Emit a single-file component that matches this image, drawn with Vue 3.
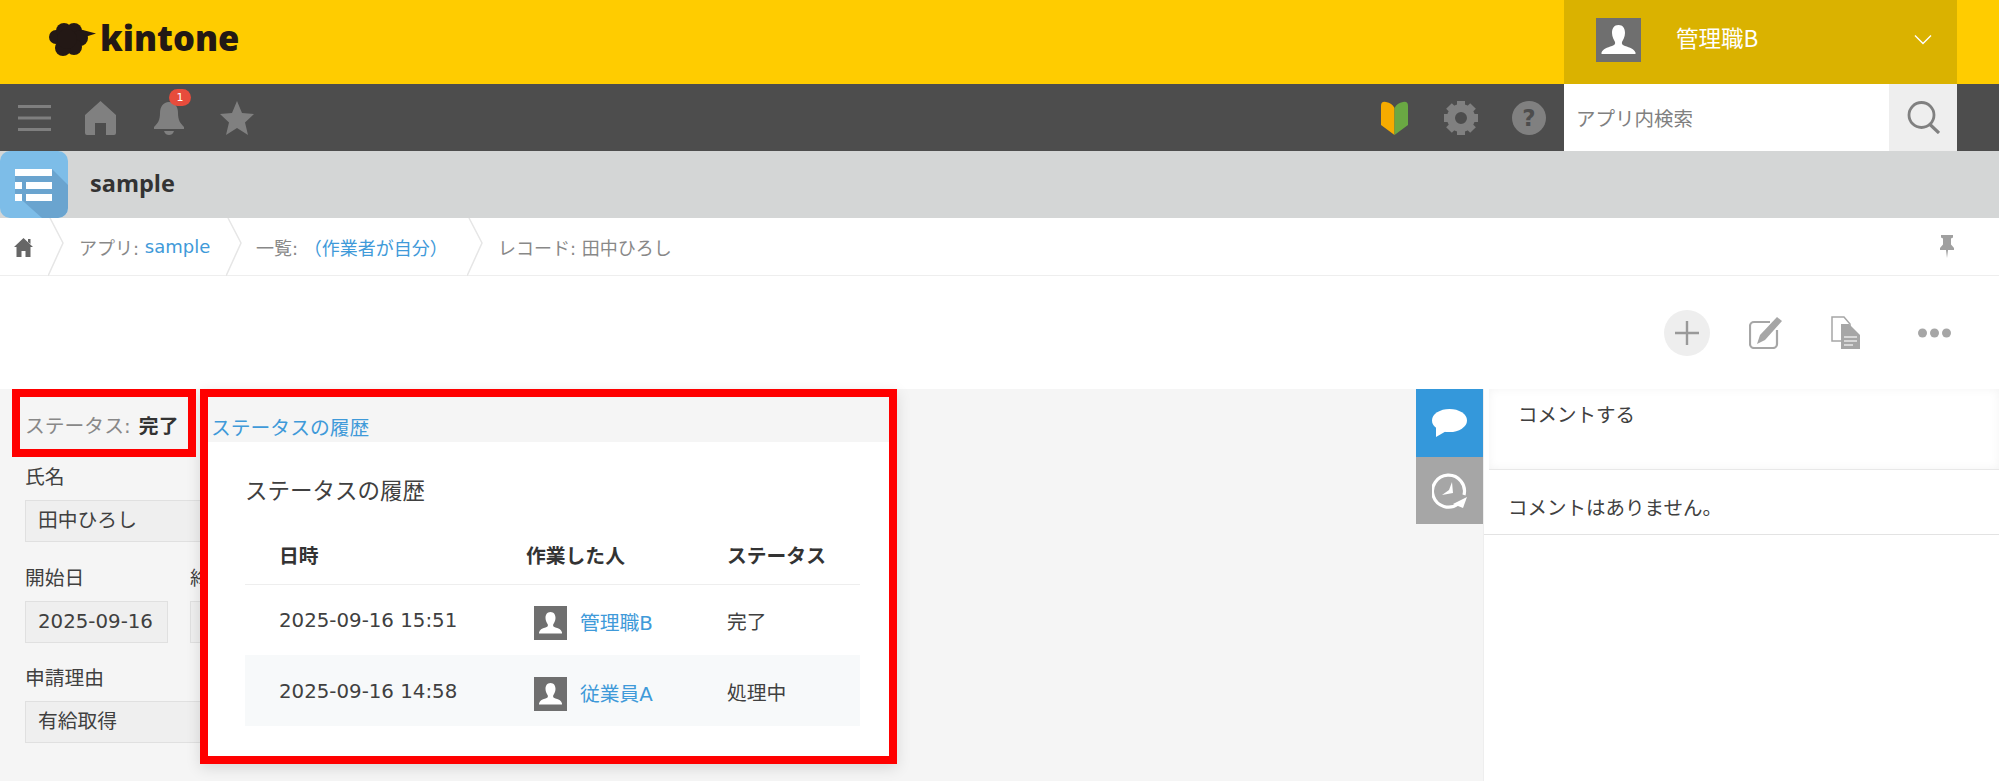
<script setup>
const rows = [
  { date: '2025-09-16 15:51', user: '管理職B', status: '完了', alt: false },
  { date: '2025-09-16 14:58', user: '従業員A', status: '処理中', alt: true }
]
const gearTeeth = [0, 45, 90, 135, 180, 225, 270, 315]
</script>

<template>
  <div class="page">
    <header class="topbar">
      <div class="logo">
        <svg class="cloud" width="47" height="33" viewBox="0 0 47 33">
          <g fill="#231815">
            <circle cx="7" cy="14" r="7" />
            <circle cx="15" cy="8" r="8" />
            <circle cx="25" cy="8" r="8" />
            <circle cx="31" cy="15" r="8" />
            <circle cx="25" cy="24" r="8" />
            <circle cx="14" cy="25" r="8" />
            <circle cx="18" cy="16" r="10" />
            <path d="M30 6 L47 10.500 L36 14 Z" />
          </g>
        </svg>
        <span class="logo-text">kintone</span>
      </div>
      <div class="user">
        <svg class="avatar-big" viewBox="0 0 45 44">
          <rect width="45" height="44" fill="#6f6f6f" />
          <path d="M22.500 7c4.500 0 6.500 3.500 6.500 8 0 4-2 7-3 9-.6 2 .6 3 3 4 5 1.500 9 3 10.500 6.500v1.500H5.500v-1.500C7 31 11 29.500 16 28c2.400-1 3.600-2 3-4-1-2-3-5-3-9 0-4.500 2-8 6.500-8z" fill="#fff" />
        </svg>
        <span class="user-name">管理職B</span>
        <svg class="chev" width="18" height="11" viewBox="0 0 18 11"><path d="M1 1.500 L9 9.500 L17 1.500" fill="none" stroke="#fff" stroke-width="1.400" /></svg>
      </div>
    </header>

    <nav class="navbar">
      <div class="nav-left">
        <svg class="ic-menu" width="33" height="28" viewBox="0 0 33 28">
          <path d="M0 2.500h33M0 14h33M0 25.500h33" stroke="#7f7f7f" stroke-width="3" />
        </svg>
        <svg class="ic-home" width="31" height="34" viewBox="0 0 31 34">
          <path d="M15.500 0 L31 14 V32 a2 2 0 0 1-2 2 H21 V22 H10 V34 H2 a2 2 0 0 1-2-2 V14 Z" fill="#808080" />
        </svg>
        <div class="bell-wrap">
          <svg width="30" height="34" viewBox="0 0 30 34">
            <path d="M15 1c6 0 9 5 9 11 0 7 2 10 6 14v2H0v-2c4-4 6-7 6-14C6 6 9 1 15 1z" fill="#808080" />
            <path d="M10 30h10c-1 3-3 4-5 4s-4-1-5-4z" fill="#808080" />
          </svg>
          <span class="badge">1</span>
        </div>
        <svg class="ic-star" width="34" height="34" viewBox="0 0 34 34">
          <path d="M17 0 L22 12 L34 13 L25 21.500 L28 34 L17 27 L6 34 L9 21.500 L0 13 L12 12 Z" fill="#808080" />
        </svg>
      </div>
      <div class="nav-right">
        <svg class="ic-leaf" width="27" height="34" viewBox="0 0 27 34">
          <path d="M13.500 34 L0 24 V5 Q0 0 5 1 Q11 2 13.500 7 Z" fill="#f6ab00" />
          <path d="M13.500 34 L27 24 V5 Q27 0 22 1 Q16 2 13.500 7 Z" fill="#6aa843" />
        </svg>
        <svg class="ic-gear" width="34" height="34" viewBox="0 0 34 34">
          <g fill="#808080">
            <rect v-for="a in gearTeeth" :key="a" x="13" y="0" width="8" height="8" :transform="`rotate(${a} 17 17)`" />
          </g>
          <circle cx="17" cy="17" r="10" fill="none" stroke="#808080" stroke-width="8" />
        </svg>
        <div class="ic-help">?</div>
        <div class="search">
          <span class="search-ph">アプリ内検索</span>
          <div class="search-btn">
            <svg width="33" height="33" viewBox="0 0 33 33">
              <circle cx="14.500" cy="14" r="12.500" fill="none" stroke="#808080" stroke-width="2.800" />
              <path d="M23 23.500 L32 32" stroke="#808080" stroke-width="3.200" />
            </svg>
          </div>
        </div>
      </div>
    </nav>

    <div class="appbar">
      <div class="app-icon">
        <svg width="68" height="67" viewBox="0 0 68 67">
          <path d="M52 18 L68 34 V57 a10 10 0 0 1-10 10 H42 L15 43 V18 Z" fill="#6aa4cf" />
          <g fill="#fff">
            <rect x="15" y="18" width="37" height="7" />
            <rect x="15" y="31" width="7" height="7" />
            <rect x="26" y="31" width="26" height="7" />
            <rect x="15" y="43" width="7" height="7" />
            <rect x="26" y="43" width="26" height="7" />
          </g>
        </svg>
      </div>
      <span class="app-name">sample</span>
    </div>

    <div class="crumbs">
      <div class="crumb crumb-home">
        <svg width="19" height="21" viewBox="0 0 19 21">
          <path d="M9.500 1 L19 10 H16.500 V20 H11.500 V14 H7.500 V20 H2.500 V10 H0 Z M14 2h2.500v5L14 5z" fill="#666" />
        </svg>
      </div>
      <svg class="sep" width="16" height="58" viewBox="0 0 16 58"><path d="M2 0 L15 25 L0 58" fill="none" stroke="#e6e6e6" stroke-width="1.500" /></svg>
      <div class="crumb crumb-app">アプリ:&nbsp;<a class="link">sample</a></div>
      <svg class="sep" width="16" height="58" viewBox="0 0 16 58"><path d="M2 0 L15 25 L0 58" fill="none" stroke="#e6e6e6" stroke-width="1.500" /></svg>
      <div class="crumb crumb-list">一覧:&nbsp;<a class="link">（作業者が自分）</a></div>
      <svg class="sep" width="16" height="58" viewBox="0 0 16 58"><path d="M2 0 L15 25 L0 58" fill="none" stroke="#e6e6e6" stroke-width="1.500" /></svg>
      <div class="crumb crumb-rec">レコード: 田中ひろし</div>
      <svg class="pin" width="14" height="23" viewBox="0 0 14 23">
        <path d="M1 0h12v2.500l-2 1v6l3 3.500v2H8l-1 8-1-8H0v-2l3-3.500v-6l-2-1z" fill="#a0a0a0" />
      </svg>
    </div>

    <div class="toolbar">
      <div class="tool-add">
        <svg width="24" height="24" viewBox="0 0 24 24"><path d="M12 0v24M0 12h24" stroke="#999" stroke-width="2.400" /></svg>
      </div>
      <svg class="tool-edit" width="33" height="32" viewBox="0 0 33 32">
        <path d="M21 5H5a4 4 0 0 0-4 4v18a4 4 0 0 0 4 4h19a4 4 0 0 0 4-4V13" fill="none" stroke="#a6a6a6" stroke-width="2.200" />
        <path d="M28 0 L33 4 L16 23 L8 27 L11 18 Z" fill="#a6a6a6" />
      </svg>
      <svg class="tool-copy" width="29" height="33" viewBox="0 0 29 33">
        <path d="M1 1h12l6 7v17H1z" fill="#fff" stroke="#a6a6a6" stroke-width="1.500" />
        <path d="M10 8h8l11 11v14H10z" fill="#a6a6a6" />
        <path d="M13 21h13M13 25h13M13 29h9" stroke="#e8e8e8" stroke-width="1.500" />
      </svg>
      <svg class="tool-more" width="33" height="10" viewBox="0 0 33 10">
        <g fill="#a6a6a6"><circle cx="4.500" cy="5" r="4.500" /><circle cx="16.500" cy="5" r="4.500" /><circle cx="28.500" cy="5" r="4.500" /></g>
      </svg>
    </div>

    <main class="main">
      <section class="record">
        <div class="status-line">ステータス: <b>完了</b></div>
        <div class="field">
          <div class="label">氏名</div>
          <div class="value value-wide">田中ひろし</div>
        </div>
        <div class="field-row">
          <div class="field">
            <div class="label">開始日</div>
            <div class="value">2025-09-16</div>
          </div>
          <div class="field">
            <div class="label">終了日</div>
            <div class="value">2025-09-16</div>
          </div>
        </div>
        <div class="field">
          <div class="label">申請理由</div>
          <div class="value value-wide">有給取得</div>
        </div>
      </section>

      <div class="tabs">
        <div class="tab tab-comment">
          <svg width="35" height="28" viewBox="0 0 35 28">
            <ellipse cx="17.500" cy="11.500" rx="17.500" ry="11.500" fill="#fff" />
            <path d="M4 17 L4 28 L16 21 Z" fill="#fff" />
          </svg>
        </div>
        <div class="tab tab-history">
          <svg width="35" height="37" viewBox="0 0 35 37">
            <path d="M26 32 A16 16 0 1 1 32 23" fill="none" stroke="#fff" stroke-width="3.200" />
            <path d="M35 25 L31 36 L21 32 Z" fill="#fff" />
            <path d="M20 10 L21 21 L10 23 L17 18 Z" fill="#fff" />
          </svg>
        </div>
      </div>

      <aside class="comments">
        <div class="comment-box">コメントする</div>
        <div class="no-comment">コメントはありません。</div>
      </aside>

      <div class="popup">
        <div class="popup-head"><a class="link">ステータスの履歴</a></div>
        <div class="popup-body">
          <h2 class="popup-title">ステータスの履歴</h2>
          <table class="history">
            <thead>
              <tr>
                <th class="c-date">日時</th>
                <th class="c-user">作業した人</th>
                <th class="c-status">ステータス</th>
              </tr>
            </thead>
            <tbody>
              <tr v-for="r in rows" :key="r.date" :class="{ alt: r.alt }">
                <td><span class="cell-text">{{ r.date }}</span></td>
                <td>
                  <div class="person">
                    <svg class="avatar" viewBox="0 0 33 34">
                      <rect width="33" height="34" fill="#6f6f6f" />
                      <path d="M16.500 6c3.500 0 5 2.800 5 6 0 3-1.500 5-2.300 6.500-.5 1.500.5 2.500 2.300 3 3.500 1 6 2.300 6.500 5v1H5v-1c.5-2.700 3-4 6.500-5 1.800-.5 2.800-1.500 2.300-3C13 17 11.500 15 11.500 12c0-3.200 1.500-6 5-6z" fill="#fff" />
                    </svg>
                    <a class="link">{{ r.user }}</a>
                  </div>
                </td>
                <td><span class="cell-text">{{ r.status }}</span></td>
              </tr>
            </tbody>
          </table>
        </div>
      </div>

      <div class="mark-status"></div>
    </main>
  </div>
</template>

<style>
html, body { margin: 0; padding: 0; background: #fff; }
</style>

<style scoped>
.page {
  width: 1999px;
  height: 781px;
  overflow: hidden;
  display: flex;
  flex-direction: column;
  font-family: "DejaVu Sans", "Noto Sans CJK JP", sans-serif;
  font-size: 19.8px;
  color: #404040;
}
.link { color: #3f9ad9; }

.topbar {
  flex: none;
  height: 84px;
  background: #ffcc00;
  display: flex;
  justify-content: space-between;
}
.logo { display: flex; align-items: center; padding-left: 49px; }
.cloud { margin-top: -6px; }
.logo-text {
  font-family: "Open Sans", sans-serif;
  font-weight: 800;
  font-size: 34.500px;
  line-height: 1;
  color: #231815;
  margin-left: 4px;
  margin-top: -7px;
}
.user {
  width: 393px;
  margin-right: 42px;
  background: #dab200;
  display: flex;
  align-items: center;
  padding-left: 32px;
  box-sizing: border-box;
}
.avatar-big { width: 45px; height: 44px; margin-top: -5px; flex: none; }
.user-name { color: #fff; font-size: 22.500px; margin-left: 35px; margin-top: -10px; font-family: "Noto Sans CJK JP", sans-serif; width: 238px; flex: none; }
.chev { margin-top: -6px; flex: none; }

.navbar {
  flex: none;
  height: 67px;
  background: #4d4d4d;
  display: flex;
  justify-content: space-between;
}
.nav-left { display: flex; align-items: center; padding-left: 18px; }
.ic-home { margin-left: 34px; }
.bell-wrap { position: relative; margin-left: 38px; height: 34px; }
.badge {
  position: absolute;
  left: 15px;
  top: -12px;
  width: 22px;
  height: 17px;
  border-radius: 9px;
  background: #e74c3c;
  color: #fff;
  font-size: 11px;
  line-height: 17px;
  text-align: center;
}
.ic-star { margin-left: 36px; }
.nav-right { display: flex; align-items: center; margin-right: 42px; }
.ic-gear { margin-left: 36px; }
.ic-help {
  width: 34px;
  height: 34px;
  border-radius: 50%;
  margin-left: 34px;
  background: #808080;
  color: #4d4d4d;
  font-weight: 700;
  font-size: 23px;
  line-height: 34px;
  text-align: center;
}
.search {
  margin-left: 18px;
  width: 393px;
  height: 67px;
  background: #fff;
  display: flex;
  align-items: center;
  justify-content: space-between;
}
.search-ph { margin-left: 12px; font-size: 19.500px; color: #808080; font-family: "Noto Sans CJK JP", sans-serif; }
.search-btn {
  width: 68px;
  height: 67px;
  background: #eeeeee;
  display: flex;
  align-items: center;
  justify-content: center;
}

.appbar {
  flex: none;
  height: 67px;
  background: #d4d6d6;
  display: flex;
  align-items: center;
}
.app-icon {
  width: 68px;
  height: 67px;
  border-radius: 10px;
  overflow: hidden;
  background: #7dbde8;
  flex: none;
}
.app-icon svg { display: block; }
.app-name {
  margin-left: 22px;
  margin-top: -4px;
  font-family: "Open Sans", sans-serif;
  font-weight: 700;
  font-size: 23.500px;
  color: #333;
}

.crumbs {
  flex: none;
  height: 58px;
  box-sizing: border-box;
  border-bottom: 1px solid #eee;
  display: flex;
  align-items: flex-start;
  font-size: 18px;
  color: #888;
}
.crumb { height: 57px; display: flex; align-items: center; white-space: nowrap; box-sizing: border-box; flex: none; }
.crumb-home { width: 48px; padding-left: 14px; }
.crumb-home svg { margin-top: 2px; }
.crumb-app { width: 162px; padding-left: 15px; }
.crumb-list { width: 225px; padding-left: 14px; }
.crumb-rec { padding-left: 15px; }
.sep { flex: none; }
.pin { margin-left: auto; margin-right: 45px; margin-top: 17px; flex: none; }

.toolbar {
  flex: none;
  height: 113px;
  background: #fff;
  display: flex;
  align-items: center;
  justify-content: flex-end;
  padding-right: 48px;
}
.tool-add {
  width: 46px;
  height: 46px;
  border-radius: 50%;
  background: #eee;
  display: flex;
  align-items: center;
  justify-content: center;
}
.tool-edit { margin-left: 39px; }
.tool-copy { margin-left: 49px; }
.tool-more { margin-left: 58px; }

.main {
  position: relative;
  flex: 1;
  display: flex;
  background: #f5f5f5;
  min-height: 0;
}
.record {
  width: 1416px;
  flex: none;
  box-sizing: border-box;
  padding-left: 25px;
}
.status-line {
  padding-top: 25px;
  height: 76px;
  box-sizing: border-box;
  line-height: 26px;
  color: #888;
}
.status-line b { color: #333; margin-left: 2px; }
.field { margin-bottom: 23.700px; }
.field-row { display: flex; gap: 22px; }
.label { height: 26px; line-height: 26px; margin-bottom: 9px; }
.value {
  width: 143px;
  height: 42px;
  box-sizing: border-box;
  border: 1px solid #e0e0e0;
  background: #efefef;
  padding-left: 12px;
  line-height: 40px;
  white-space: nowrap;
  overflow: hidden;
}
.value-wide { width: 300px; }

.tabs { width: 67px; flex: none; }
.tab { height: 67.500px; display: flex; align-items: center; justify-content: center; }
.tab-comment { background: #3498db; }
.tab-history { background: #a6a6a6; }

.comments {
  flex: 1;
  background: #fff;
  border-left: 1px solid #eee;
  font-size: 19.500px;
  font-family: "Noto Sans CJK JP", sans-serif;
}
.comment-box {
  margin-left: 5px;
  height: 81px;
  box-sizing: border-box;
  padding: 11px 0 0 29px;
  line-height: 28px;
  border-bottom: 1px solid #e8e8e8;
  box-shadow: inset 0 0 10px rgba(0, 0, 0, 0.05);
}
.no-comment {
  height: 65px;
  box-sizing: border-box;
  padding: 23px 0 0 24px;
  line-height: 28px;
  border-bottom: 1px solid #e3e3e3;
}

.popup {
  position: absolute;
  left: 200px;
  top: 0;
  width: 697px;
  height: 375px;
  box-sizing: border-box;
  border: 8px solid #ff0000;
  box-shadow: 0 4px 14px rgba(0, 0, 0, 0.12);
  display: flex;
  flex-direction: column;
}
.popup-head {
  height: 45px;
  flex: none;
  box-sizing: border-box;
  background: #f5f5f5;
  padding: 17px 0 0 3px;
  line-height: 26px;
  font-family: "Noto Sans CJK JP", sans-serif;
}
.popup-body {
  flex: 1;
  background: #fff;
  padding: 0 29px 0 37px;
}
.popup-title {
  margin: 0;
  padding-top: 30px;
  height: 85px;
  box-sizing: border-box;
  font-weight: 400;
  font-size: 22.500px;
  line-height: 34px;
  font-family: "Noto Sans CJK JP", sans-serif;
}
.history { border-collapse: collapse; width: 615px; table-layout: fixed; }
.history th {
  height: 57px;
  box-sizing: border-box;
  padding: 0 0 2px 34px;
  text-align: left;
  font-weight: 700;
  border-bottom: 1px solid #eee;
  font-family: "Noto Sans CJK JP", sans-serif;
  color: #333;
}
.c-date { width: 247px; }
.c-user { width: 201px; }
.c-status { width: 167px; }
.history td { height: 71px; padding: 0 0 0 34px; box-sizing: border-box; }
.history tr.alt td { background: #f7f9fa; }
.cell-text { position: relative; top: 1px; }
.person { display: flex; align-items: center; margin-left: 8px; gap: 13px; }
.avatar { width: 33px; height: 34px; flex: none; margin-top: 6px; }
.person .link { position: relative; top: 2px; }
.mark-status {
  position: absolute;
  left: 12px;
  top: 0;
  width: 184px;
  height: 68px;
  box-sizing: border-box;
  border: 8px solid #ff0000;
}
</style>
